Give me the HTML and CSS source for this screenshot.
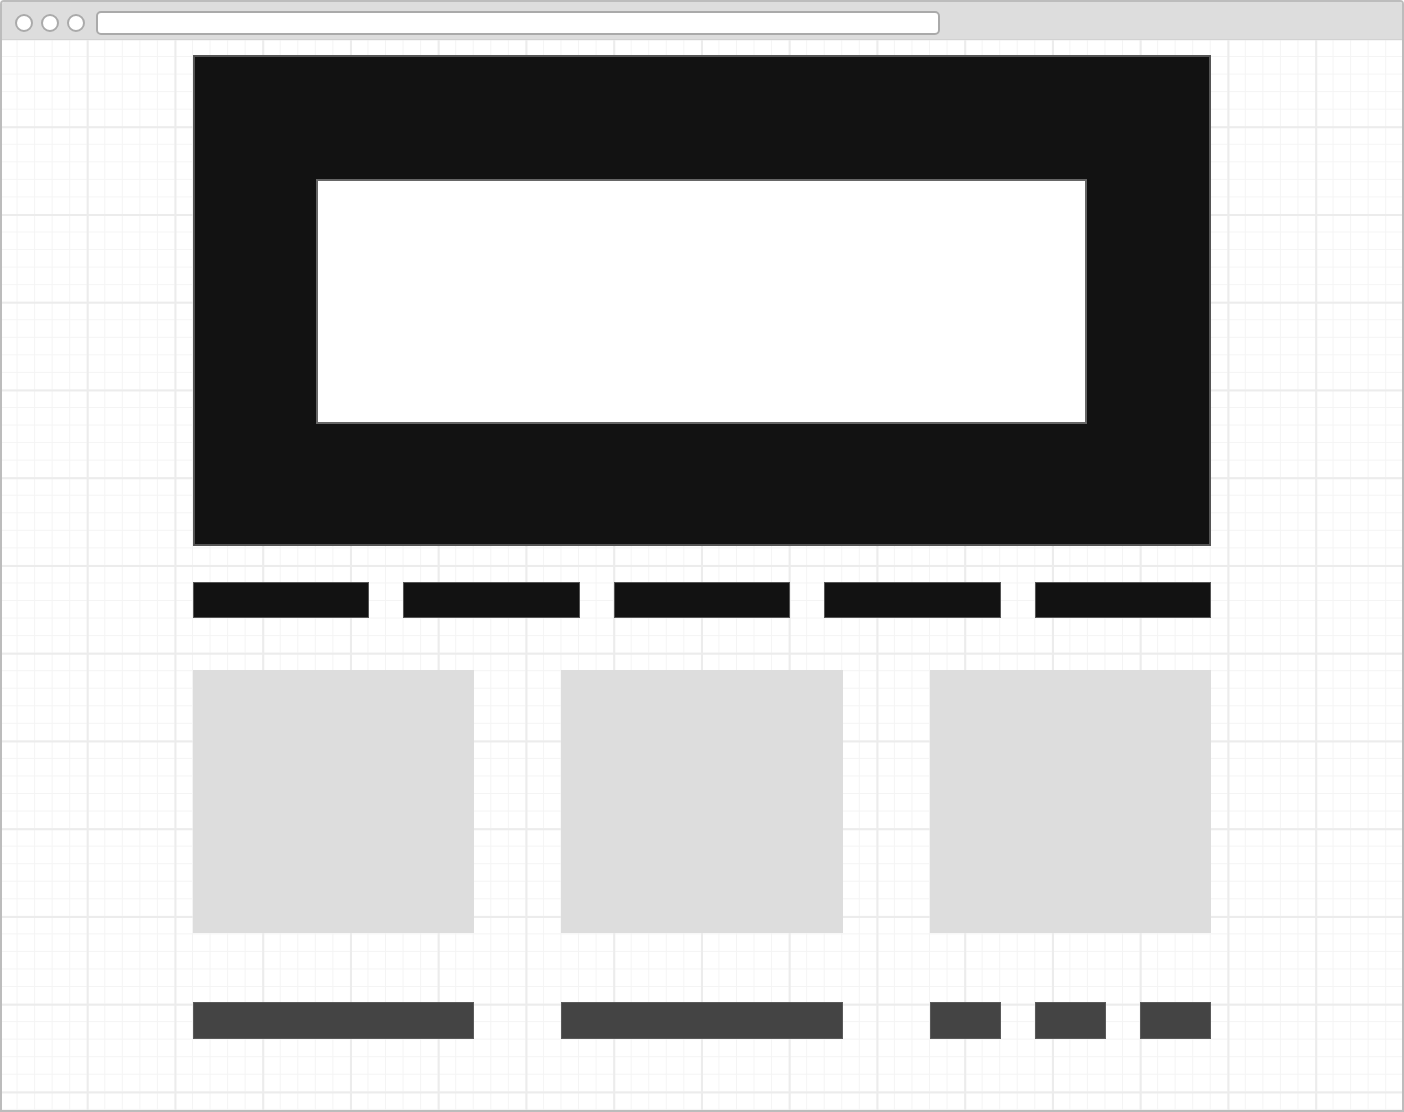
FILE: index.html
```html
<!DOCTYPE html>
<html lang="en">
<head>
    <meta charset="UTF-8">
    <meta name="viewport" content="width=device-width, initial-scale=1.0">
    <title>Wireframe</title>
    <link rel="stylesheet" href="styles.css">
</head>
<body>
    <div class="window">
        <div class="chrome">
            <span class="dot"></span>
            <span class="dot"></span>
            <span class="dot"></span>
            <div class="address"></div>
        </div>

        <div class="canvas">
            <div class="page">
                <div class="hero">
                    <div class="hero-box"></div>
                </div>

                <div class="nav">
                    <div class="nav-item"></div>
                    <div class="nav-item"></div>
                    <div class="nav-item"></div>
                    <div class="nav-item"></div>
                    <div class="nav-item"></div>
                </div>

                <div class="cards">
                    <div class="card"></div>
                    <div class="card"></div>
                    <div class="card"></div>
                </div>

                <div class="footer">
                    <div class="bar"></div>
                    <div class="bar"></div>
                    <div class="bar-group">
                        <div class="bar"></div>
                        <div class="bar"></div>
                        <div class="bar"></div>
                    </div>
                </div>
            </div>
        </div>
    </div>
</body>
</html>
```

FILE: styles.css
```css
html, body {
    margin: 0;
    padding: 0;
    background: white;
}
.window {
    width: 1404px;
    height: 1112px;
    box-sizing: border-box;
    border: 2px solid #bcbcbc;
    border-radius: 4px 4px 0 0;
    display: flex;
    flex-direction: column;
    overflow: hidden;
}
.chrome {
    height: 38px;
    flex: none;
    background: #dddddd;
    display: flex;
    align-items: center;
    padding: 4px 0 0 13px;
    gap: 8px;
    box-sizing: border-box;
    border-bottom: 1px solid #d2d2d2;
}
.dot {
    width: 18px;
    height: 18px;
    box-sizing: border-box;
    border-radius: 50%;
    border: 2px solid #aaaaaa;
    background: white;
}
.address {
    width: 844px;
    height: 24px;
    margin-left: 3px;
    box-sizing: border-box;
    background: white;
    border: 2px solid #aaaaaa;
    border-radius: 5px;
}
.canvas {
    flex: 1;
    background-color: white;
    background-image:
        linear-gradient(to right, #ececec 1.5px, transparent 1.5px),
        linear-gradient(to bottom, #ececec 1.5px, transparent 1.5px),
        linear-gradient(to right, #f4f4f4 1.4px, transparent 1.4px),
        linear-gradient(to bottom, #f4f4f4 1.4px, transparent 1.4px);
    background-size: 87.75px 87.75px, 87.75px 87.75px, 17.55px 17.55px, 17.55px 17.55px;
    background-position: -3px -1.5px;
}
.page {
    width: 1018px;
    margin: 0 auto;
    padding-top: 15px;
}
.hero {
    height: 491px;
    box-sizing: border-box;
    background: #121212;
    border: 2px solid #555555;
    padding: 122px 122px 120px 121px;
}
.hero-box {
    height: 100%;
    box-sizing: border-box;
    background: white;
    border: 2px solid #666666;
}
.nav {
    display: flex;
    gap: 34px;
    margin-top: 36px;
}
.nav-item {
    flex: 1;
    height: 36px;
    box-sizing: border-box;
    background: #121212;
    border: 1px solid #555555;
}
.cards {
    display: grid;
    grid-template-columns: repeat(3, 1fr);
    gap: 87px;
    margin-top: 52px;
}
.card {
    height: 263px;
    background: #dddddd;
}
.footer {
    display: grid;
    grid-template-columns: repeat(3, 1fr);
    gap: 87px;
    margin-top: 69px;
}
.bar-group {
    display: flex;
    gap: 34px;
}
.bar {
    flex: 1;
    height: 37px;
    box-sizing: border-box;
    background: #444444;
    border: 1px solid #5a5a5a;
}
```
